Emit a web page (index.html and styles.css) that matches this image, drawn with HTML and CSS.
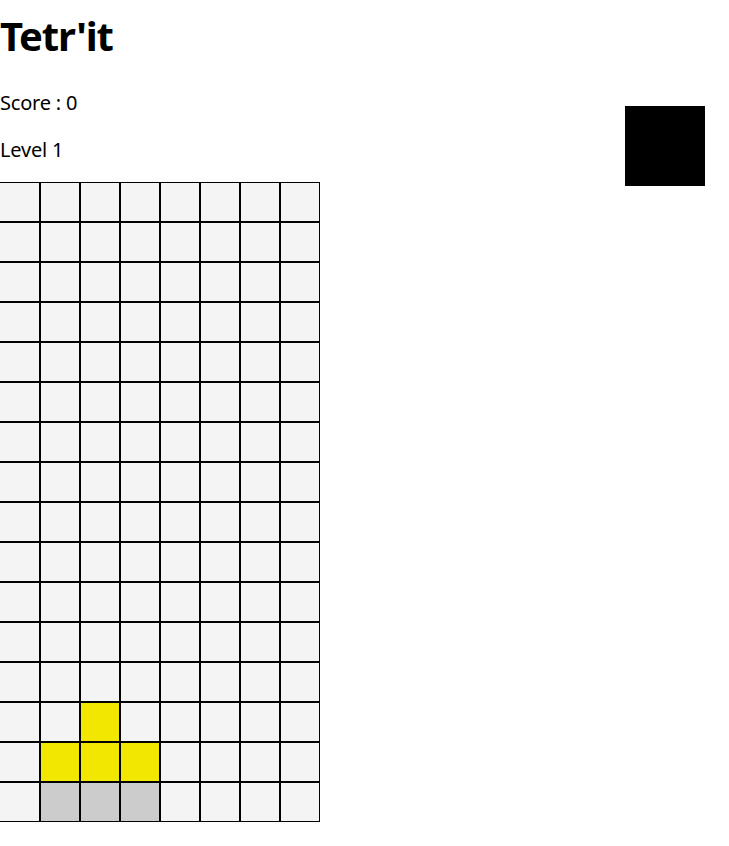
FILE: index.html
```html
<!DOCTYPE html>
<html lang="en">
<head>
<meta charset="utf-8">
<title>Tetr'it</title>
<link rel="stylesheet" href="styles.css">
</head>
<body>
<h1 class="title">Tetr'it</h1>
<div class="game">
  <div class="left">
    <p class="info">Score : 0</p>
    <p class="info last">Level 1</p>
    <div class="board">
      <div class="c"></div><div class="c"></div><div class="c"></div><div class="c"></div><div class="c"></div><div class="c"></div><div class="c"></div><div class="c"></div>
      <div class="c"></div><div class="c"></div><div class="c"></div><div class="c"></div><div class="c"></div><div class="c"></div><div class="c"></div><div class="c"></div>
      <div class="c"></div><div class="c"></div><div class="c"></div><div class="c"></div><div class="c"></div><div class="c"></div><div class="c"></div><div class="c"></div>
      <div class="c"></div><div class="c"></div><div class="c"></div><div class="c"></div><div class="c"></div><div class="c"></div><div class="c"></div><div class="c"></div>
      <div class="c"></div><div class="c"></div><div class="c"></div><div class="c"></div><div class="c"></div><div class="c"></div><div class="c"></div><div class="c"></div>
      <div class="c"></div><div class="c"></div><div class="c"></div><div class="c"></div><div class="c"></div><div class="c"></div><div class="c"></div><div class="c"></div>
      <div class="c"></div><div class="c"></div><div class="c"></div><div class="c"></div><div class="c"></div><div class="c"></div><div class="c"></div><div class="c"></div>
      <div class="c"></div><div class="c"></div><div class="c"></div><div class="c"></div><div class="c"></div><div class="c"></div><div class="c"></div><div class="c"></div>
      <div class="c"></div><div class="c"></div><div class="c"></div><div class="c"></div><div class="c"></div><div class="c"></div><div class="c"></div><div class="c"></div>
      <div class="c"></div><div class="c"></div><div class="c"></div><div class="c"></div><div class="c"></div><div class="c"></div><div class="c"></div><div class="c"></div>
      <div class="c"></div><div class="c"></div><div class="c"></div><div class="c"></div><div class="c"></div><div class="c"></div><div class="c"></div><div class="c"></div>
      <div class="c"></div><div class="c"></div><div class="c"></div><div class="c"></div><div class="c"></div><div class="c"></div><div class="c"></div><div class="c"></div>
      <div class="c"></div><div class="c"></div><div class="c"></div><div class="c"></div><div class="c"></div><div class="c"></div><div class="c"></div><div class="c"></div>
      <div class="c"></div><div class="c"></div><div class="c y"></div><div class="c"></div><div class="c"></div><div class="c"></div><div class="c"></div><div class="c"></div>
      <div class="c"></div><div class="c y"></div><div class="c y"></div><div class="c y"></div><div class="c"></div><div class="c"></div><div class="c"></div><div class="c"></div>
      <div class="c"></div><div class="c g"></div><div class="c g"></div><div class="c g"></div><div class="c"></div><div class="c"></div><div class="c"></div><div class="c"></div>
    </div>
  </div>
  <div class="next"></div>
</div>
</body>
</html>
```
FILE: styles.css
```css
html, body {
  margin: 0;
  padding: 0;
  background: #fff;
}
body {
  font-family: "Noto Sans", "Open Sans", sans-serif;
  font-size: 20px;
  color: #000;
  padding-top: 9px;
}
.title {
  font-size: 40px;
  font-weight: 700;
  letter-spacing: -1.2px;
  margin: 0 0 26px 0;
  line-height: 1.36;
}
.game {
  display: flex;
  justify-content: space-between;
  align-items: flex-start;
  padding-right: 24px;
}
.left {
  display: flex;
  flex-direction: column;
}
.info {
  margin: 0 0 20px 0;
  line-height: 27px;
  letter-spacing: -0.2px;
}
.info.last {
  margin-bottom: 19px;
}
.board {
  display: grid;
  grid-template-columns: repeat(8, 40px);
  grid-auto-rows: 40px;
  width: 320px;
}
.c {
  box-sizing: border-box;
  border: 1px solid #000;
  background: #f4f4f4;
}
.c:nth-child(8n+1) {
  border-left-width: 0;
}
.c.y { background: #f2e700; }
.c.g { background: #cccccc; }
.next {
  width: 80px;
  height: 80px;
  background: #000;
  margin-top: 17px;
}
```
